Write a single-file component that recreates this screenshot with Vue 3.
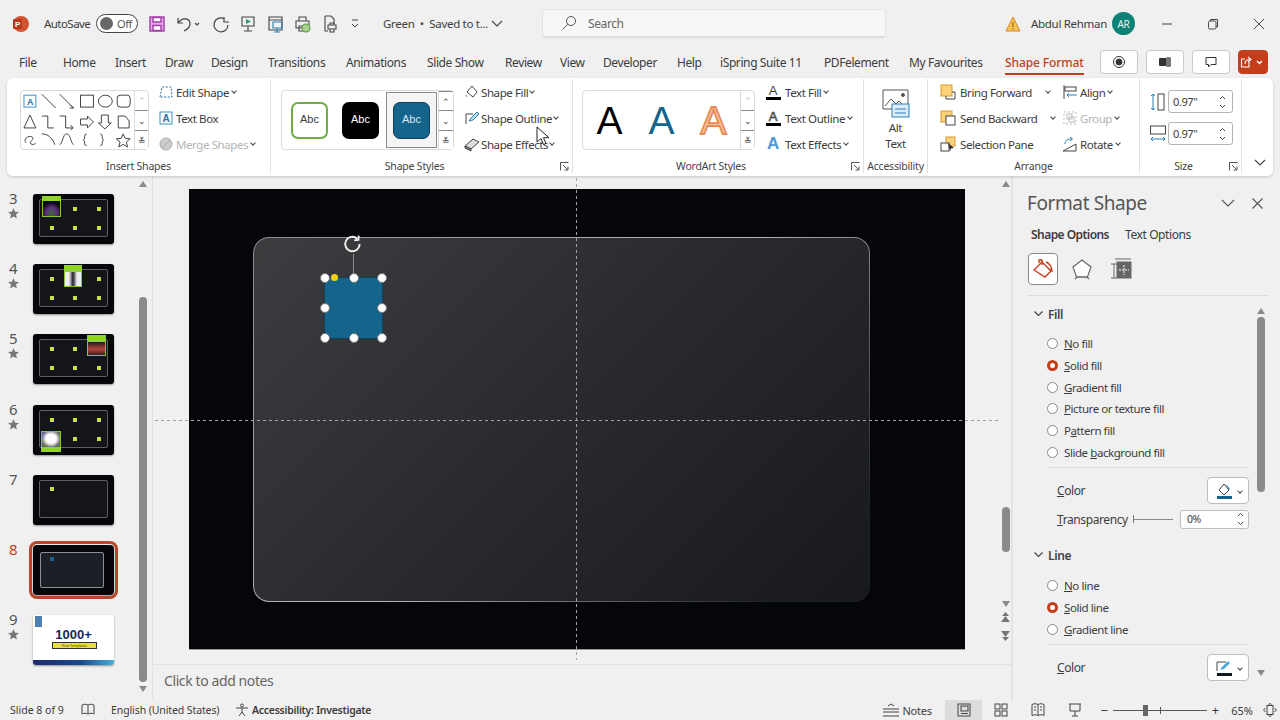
<script setup>
const tabs = [
  { name: 'File', w: 44 }, { name: 'Home', w: 52 }, { name: 'Insert', w: 50 }, { name: 'Draw', w: 46 },
  { name: 'Design', w: 57 }, { name: 'Transitions', w: 78 }, { name: 'Animations', w: 81 }, { name: 'Slide Show', w: 78 },
  { name: 'Review', w: 55 }, { name: 'View', w: 43 }, { name: 'Developer', w: 74 }, { name: 'Help', w: 43 },
  { name: 'iSpring Suite 11', w: 104 }, { name: 'PDFelement', w: 85 }, { name: 'My Favourites', w: 96 }, { name: 'Shape Format', w: 90, active: true },
]

const sixDots = [[17, 13], [40, 13], [64, 13], [17, 32], [40, 32], [64, 32]]
const slides = [
  { n: 3, star: true, dots: sixDots, pop: { x: 9, y: 2, w: 19, h: 21, c: 'rainbow' } },
  { n: 4, star: true, dots: sixDots, pop: { x: 31, y: 1, w: 18, h: 22, c: 'mono' } },
  { n: 5, star: true, dots: sixDots, pop: { x: 54, y: 1, w: 19, h: 21, c: 'sunset' } },
  { n: 6, star: true, dots: sixDots, pop: { x: 8, y: 26, w: 20, h: 21, c: 'paper' } },
  { n: 7, dots: [[17, 12]] },
  { n: 8, current: true, dots: [] },
  { n: 9, star: true, light: true, dots: [] },
]

const fillOptions = [
  { key: 'N', rest: 'o fill' },
  { key: 'S', rest: 'olid fill', on: true },
  { key: 'G', rest: 'radient fill' },
  { key: 'P', rest: 'icture or texture fill' },
  { pre: 'P', key: 'a', rest: 'ttern fill' },
  { pre: 'Slide ', key: 'b', rest: 'ackground fill' },
]
const lineOptions = [
  { key: 'N', rest: 'o line' },
  { key: 'S', rest: 'olid line', on: true },
  { key: 'G', rest: 'radient line' },
]

const handles = [
  [0, 0], [50, 0], [100, 0], [0, 50], [100, 50], [0, 100], [50, 100], [100, 100],
]
</script>

<template>
  <div class="app">
    <!-- title bar -->
    <header class="titlebar">
      <svg class="logo" width="18" height="18" viewBox="0 0 18 18">
        <circle cx="9" cy="9" r="8" fill="#d35230" />
        <rect x="1" y="4" width="9" height="10" rx="1" fill="#b7391b" />
        <text x="5.5" y="12" font-size="8" font-weight="700" fill="#fff" text-anchor="middle" font-family="Liberation Sans">P</text>
      </svg>
      <span class="autosave">AutoSave</span>
      <div class="toggle"><i></i><span>Off</span></div>
      <div class="qat">
        <svg width="18" height="18" viewBox="0 0 18 18" fill="none" stroke="#a23aa8" stroke-width="1.4"><rect x="2" y="2" width="14" height="14" fill="#e3a6e6" /><rect x="5" y="2.5" width="8" height="4.5" fill="#fff" /><rect x="5" y="10.5" width="8" height="5" fill="#fff" /></svg>
        <svg class="q-undo" width="26" height="18" viewBox="0 0 26 18" fill="none" stroke="#444" stroke-width="1.2"><path d="M3 3v5h5M3.5 8C6 3 14 2 15 8c.6 4-3 6.5-6 8" /><path d="M20 8l2 2 2-2" /></svg>
        <svg class="q-redo" width="18" height="18" viewBox="0 0 18 18" fill="none" stroke="#444" stroke-width="1.2"><path d="M12 2v5h5M12 3.5A7 7 0 1 0 16 10" /></svg>
        <svg class="q-1" width="16" height="18" viewBox="0 0 16 18" fill="none" stroke="#444" stroke-width="1.1"><path d="M2 2h12v9H2zM8 11v5M4 16h8" /><path d="M6 4l5 2.5L6 9z" fill="#2e9b6b" stroke="none" /></svg>
        <svg class="q-2" width="18" height="18" viewBox="0 0 18 18" fill="none" stroke="#444" stroke-width="1.1"><path d="M2 2h13v13H2zM2 5h13" /><path d="M6 7h9v6H6z" stroke="#2a80b9" /><path d="M10 13v4M7 17h6" stroke="#2a80b9" /></svg>
        <svg class="q-3" width="18" height="18" viewBox="0 0 18 18" fill="none" stroke="#444" stroke-width="1.1"><path d="M5 6V2h7v4M2 6h13v7H2zM5 11h6v5H5z" /><circle cx="12" cy="13" r="4" fill="#a7d08c" stroke="#5b9a44" /></svg>
        <svg class="q-4" width="16" height="18" viewBox="0 0 16 18" fill="none" stroke="#444" stroke-width="1.1"><path d="M3 1h6l3 3v5M3 1v15h3" /><path d="M6 10h8v4H6zM8 14v3h4v-3M8 10V8h4v2" /></svg>
        <svg class="q-5" width="10" height="12" viewBox="0 0 10 12" fill="none" stroke="#444" stroke-width="1"><path d="M2 2h6M2 6l3 3 3-3" /></svg>
      </div>
      <span class="docname">Green&nbsp; •&nbsp; Saved to t...</span>
      <svg class="doc-chev" width="12" height="8" viewBox="0 0 12 8" fill="none" stroke="#444" stroke-width="1.1"><path d="M1 1l5 5 5-5" /></svg>
      <div class="search">
        <svg width="16" height="16" viewBox="0 0 16 16" fill="none" stroke="#555" stroke-width="1"><circle cx="10" cy="6" r="4.5" /><path d="M6.8 9.2L1.5 14.5" /></svg>
        <span>Search</span>
      </div>
      <svg class="warn" width="16" height="16" viewBox="0 0 16 16"><path d="M8 1l7 14H1z" fill="#f6c64f" stroke="#d9822b" stroke-width="1" /><path d="M8 6v5M8 12v1.4" stroke="#8a4b10" stroke-width="1" /></svg>
      <span class="user">Abdul Rehman</span>
      <div class="avatar">AR</div>
      <div class="winctl">
        <svg width="12" height="12" viewBox="0 0 12 12" stroke="#444" fill="none"><path d="M1 6h10" /></svg>
        <svg width="12" height="12" viewBox="0 0 12 12" stroke="#444" fill="none"><rect x="1.5" y="3" width="7.5" height="8" rx="1.5" /><path d="M3.5 3V1.5h7V9H9" /></svg>
        <svg width="12" height="12" viewBox="0 0 12 12" stroke="#444" fill="none"><path d="M1 1l10 10M11 1L1 11" /></svg>
      </div>
    </header>

    <!-- tabs -->
    <nav class="tabs">
      <span v-for="t in tabs" :key="t.name" class="tab" :class="{ active: t.active }" :style="{ width: t.w + 'px' }"><b>{{ t.name }}</b></span>
      <div class="tab-btns">
        <button class="tbtn"><svg width="14" height="14" viewBox="0 0 14 14" fill="none" stroke="#333"><circle cx="7" cy="7" r="5.5" /><circle cx="7" cy="7" r="3" fill="#333" /></svg></button>
        <button class="tbtn"><svg width="14" height="14" viewBox="0 0 14 14"><rect x="1" y="3" width="8" height="8" rx="1" fill="#333" /><rect x="8" y="2" width="5" height="10" rx="1.5" fill="#777" /></svg></button>
        <button class="tbtn"><svg width="14" height="14" viewBox="0 0 14 14" fill="none" stroke="#333"><path d="M2 2.5h10v7H7l-2.500 2.500V9.500H2z" /></svg></button>
        <button class="tbtn share"><svg width="26" height="14" viewBox="0 0 26 14" fill="none" stroke="#fff" stroke-width="1.1"><path d="M9 7v5H1.500V4H5M5 9c0-3 2-4.500 5-4.500M8 2l3 2.500L8 7" /><path d="M17 6l2.500 2.500L22 6" stroke-width="1.400" /></svg></button>
      </div>
    </nav>

    <!-- ribbon -->
    <section class="ribbon">
      <div class="grp g-insert">
        <div class="grp-body">
          <div class="gallery shapes">
            <svg width="114" height="58" viewBox="0 0 114 58" fill="none" stroke="#444" stroke-width="1">
              <rect x="3" y="4" width="12" height="12" stroke="#3d8fc6" /><text x="9" y="14" font-size="9" fill="#2a6fa5" stroke="none" text-anchor="middle" font-weight="700" font-family="Liberation Sans">A</text>
              <path d="M21 3l14 14M39 3l14 14M50 14l3 3-4 0" />
              <rect x="60" y="4" width="13" height="12" /><ellipse cx="85" cy="10" rx="7" ry="6" /><rect x="97" y="4" width="13" height="12" rx="3" />
              <path d="M3 37l6-13 6 13zM21 25h6v12h6M39 25h6v12h7M50 34l2.500 3-2.500 2" />
              <path d="M60 28h7v-3l6 6-6 6v-3h-7zM81 24h7v8h3l-6.500 6-6.500-6h3zM98 37V25h7l4 5v7z" />
              <path d="M5 52c-3-3 2-8 6-6s-4 5-1 7 5-1 5-1M21 43c6 0 11 4 13 11M39 54c3-1 3-11 7-11s4 9 7 11" />
              <path d="M66 43c-3 0-1 5-3 6 2 1 0 6 3 6M80 43c3 0 1 5 3 6-2 1 0 6-3 6" />
              <path d="M103 43l2 4.500 5 .5-3.800 3.200 1.200 5-4.400-2.700-4.400 2.700 1.200-5L96 48l5-.5z" />
            </svg>
            <div class="gal-scroll"><span class="dis">⌃</span><span class="box">⌄</span><span class="box">≚</span></div>
          </div>
          <div class="cmds edit-cmds">
            <div class="cmd">
              <svg width="16" height="16" viewBox="0 0 16 16" fill="none" stroke="#2a6fa5" stroke-dasharray="2 1.500"><path d="M2 13L4 3h9l1 10z" /></svg>
              <span>Edit Shape</span><em></em>
            </div>
            <div class="cmd">
              <svg width="16" height="16" viewBox="0 0 16 16" fill="none" stroke="#3d8fc6"><rect x="2" y="2" width="12" height="12" /><text x="8" y="12" font-size="10" font-weight="700" fill="#2a6fa5" stroke="none" text-anchor="middle" font-family="Liberation Sans">A</text></svg>
              <span>Text Box</span>
            </div>
            <div class="cmd off">
              <svg width="16" height="16" viewBox="0 0 16 16" fill="#ccc" stroke="#aaa"><circle cx="8" cy="8" r="6" /><path d="M4 12l8-8" /></svg>
              <span>Merge Shapes</span><em></em>
            </div>
          </div>
        </div>
        <div class="grp-label">Insert Shapes</div>
      </div>

      <div class="grp g-styles">
        <div class="grp-body">
          <div class="gallery styles">
            <div class="abc-cell"><div class="abc a1">Abc</div></div>
            <div class="abc-cell"><div class="abc a2">Abc</div></div>
            <div class="abc-cell sel"><div class="abc a3">Abc</div></div>
            <div class="gal-scroll wide"><span class="box">⌃</span><span class="box">⌄</span><span class="box">≚</span></div>
          </div>
          <div class="cmds fx-cmds">
            <div class="cmd">
              <svg width="16" height="16" viewBox="0 0 16 16" fill="none" stroke="#444"><path d="M3 8l5-6 5 6-4 5z" /><path d="M2 11c0 1 1 2 1 2" stroke="#2a6fa5" /></svg>
              <span>Shape Fill</span><em></em>
            </div>
            <div class="cmd">
              <svg width="16" height="16" viewBox="0 0 16 16" fill="none"><path d="M2 14V4h7" stroke="#444" /><path d="M5 11l2-3 6-6 2 2-6 6z" fill="#bfe0f3" stroke="#2a80b9" /></svg>
              <span>Shape Outline</span><em></em>
            </div>
            <div class="cmd">
              <svg width="16" height="16" viewBox="0 0 16 16" fill="#888" stroke="#444"><path d="M1 10l8-7 6 3-8 7z" fill="#ddd" /><path d="M1 10l6 3v2l-6-3z" /></svg>
              <span>Shape Effects</span><em></em>
            </div>
          </div>
        </div>
        <div class="grp-label shifted">Shape Styles<svg class="launcher" width="9" height="9" viewBox="0 0 9 9" fill="none" stroke="#555"><path d="M.5 8.500v-8h8M3 3l5 5M8 4.500V8H4.500" /></svg></div>
      </div>

      <div class="grp g-wordart">
        <div class="grp-body">
          <div class="gallery wa">
            <div class="wa-letters">
              <span class="w1">A</span><span class="w2">A</span><span class="w3">A</span>
            </div>
            <div class="gal-scroll"><span class="dis">⌃</span><span class="box">⌄</span><span class="box">≚</span></div>
          </div>
          <div class="cmds ta-cmds">
            <div class="cmd">
              <span class="ta-ico"><u class="ul-a">A</u><i class="bar k"></i></span>
              <span>Text Fill</span><em></em>
            </div>
            <div class="cmd">
              <span class="ta-ico"><u class="ul-a hollow">A</u><i class="bar k"></i></span>
              <span>Text Outline</span><em></em>
            </div>
            <div class="cmd">
              <span class="ta-ico"><u class="ul-a blue">A</u></span>
              <span>Text Effects</span><em></em>
            </div>
          </div>
        </div>
        <div class="grp-label shifted">WordArt Styles<svg class="launcher" width="9" height="9" viewBox="0 0 9 9" fill="none" stroke="#555"><path d="M.5 8.500v-8h8M3 3l5 5M8 4.500V8H4.500" /></svg></div>
      </div>

      <div class="grp g-access">
        <div class="grp-body alt">
          <svg width="28" height="32" viewBox="0 0 28 32" fill="none" stroke="#555"><path d="M1 2h25v19H1z" /><path d="M3 18l6-7 5 5 3-3 6 6" /><circle cx="21" cy="7" r="1.500" fill="#555" /><rect x="10" y="16" width="17" height="13" fill="#dcecf7" stroke="#2a80b9" /><path d="M13 21h11M13 25h11" stroke="#2a80b9" /></svg>
          <span>Alt</span><span>Text</span>
        </div>
        <div class="grp-label">Accessibility</div>
      </div>

      <div class="grp g-arrange">
        <div class="grp-body">
          <div class="cmds arr1">
            <div class="cmd">
              <svg width="16" height="16" viewBox="0 0 16 16"><rect x="1" y="1" width="11" height="11" fill="#fbd27a" stroke="#d8992f" /><path d="M12 8h3v7H6v-3" fill="none" stroke="#444" /></svg>
              <span>Bring Forward</span><em class="far"></em>
            </div>
            <div class="cmd">
              <svg width="16" height="16" viewBox="0 0 16 16"><rect x="1" y="1" width="11" height="11" fill="#fbd27a" stroke="#d8992f" /><rect x="6" y="6" width="9" height="9" fill="#fff" stroke="#444" /></svg>
              <span>Send Backward</span><em class="far"></em>
            </div>
            <div class="cmd">
              <svg width="16" height="16" viewBox="0 0 16 16"><rect x="6" y="1" width="9" height="9" fill="#fbd27a" stroke="#d8992f" /><rect x="1" y="7" width="8" height="8" fill="#fff" stroke="#444" /><path d="M8 7l6 5-3 .5-1 3z" fill="#333" /></svg>
              <span>Selection Pane</span>
            </div>
          </div>
          <div class="cmds arr2">
            <div class="cmd">
              <svg width="16" height="16" viewBox="0 0 16 16" fill="none" stroke="#444"><path d="M2 1v14" /><rect x="3" y="3" width="11" height="4" /><path d="M15 11H5M7 9l-2 2 2 2" stroke="#2a80b9" /></svg>
              <span>Align</span><em></em>
            </div>
            <div class="cmd off">
              <svg width="16" height="16" viewBox="0 0 16 16" fill="none" stroke="#bbb"><rect x="2" y="2" width="12" height="12" stroke-dasharray="2 2" /><rect x="5" y="4" width="5" height="5" /><rect x="7" y="7" width="5" height="5" /></svg>
              <span>Group</span><em></em>
            </div>
            <div class="cmd">
              <svg width="16" height="16" viewBox="0 0 16 16" fill="none" stroke="#444"><path d="M1 15L14 8v7z" /><path d="M3 8c0-4 3-5 7-5M8 1l2.500 2L8 5" stroke="#2a80b9" /></svg>
              <span>Rotate</span><em></em>
            </div>
          </div>
        </div>
        <div class="grp-label">Arrange</div>
      </div>

      <div class="grp g-size">
        <div class="grp-body sizes">
          <div class="size-row">
            <svg width="16" height="20" viewBox="0 0 16 20" fill="none" stroke="#444"><rect x="8" y="2" width="6" height="16" /><path d="M3 2v16M1 4l2-2 2 2M1 16l2 2 2-2" stroke="#2a80b9" /></svg>
            <div class="spin">
              <span>0.97"</span>
              <svg width="7" height="14" viewBox="0 0 7 14" fill="none" stroke="#444"><path d="M1 4l2.500-2.500L6 4M1 10l2.500 2.500L6 10" /></svg>
            </div>
          </div>
          <div class="size-row">
            <svg width="16" height="20" viewBox="0 0 16 20" fill="none" stroke="#444"><rect x="0.500" y="2" width="15" height="8" /><path d="M1 15h14M3 13l-2 2 2 2M13 13l2 2-2 2" stroke="#2a80b9" /></svg>
            <div class="spin">
              <span>0.97"</span>
              <svg width="7" height="14" viewBox="0 0 7 14" fill="none" stroke="#444"><path d="M1 4l2.500-2.500L6 4M1 10l2.500 2.500L6 10" /></svg>
            </div>
          </div>
        </div>
        <div class="grp-label shifted">Size<svg class="launcher" width="9" height="9" viewBox="0 0 9 9" fill="none" stroke="#555"><path d="M.5 8.500v-8h8M3 3l5 5M8 4.500V8H4.500" /></svg></div>
      </div>

      <svg class="collapse" width="12" height="8" viewBox="0 0 12 8" fill="none" stroke="#444" stroke-width="1.1"><path d="M1 1l5 5 5-5" /></svg>
    </section>

    <!-- workspace -->
    <main class="workspace">
      <aside class="slides">
        <div class="slide-list">
          <div v-for="s in slides" :key="s.n" class="slide-row">
            <div class="slide-no" :class="{ cur: s.current }">
              <span>{{ s.n }}</span>
              <svg v-if="s.star" width="11" height="11" viewBox="0 0 10 10"><path d="M5 0l1.400 3.300L10 3.700 7.300 6l.8 3.600L5 7.700 1.900 9.600 2.700 6 0 3.700l3.600-.4z" fill="#777" /></svg>
            </div>
            <div class="thumb" :class="{ current: s.current, light: s.light }">
              <template v-if="!s.light">
                <div class="t-frame"></div>
                <i v-for="(d, i) in s.dots" :key="i" class="t-dot" :style="{ left: d[0] + 'px', top: d[1] + 'px' }"></i>
                <div v-if="s.pop" class="t-pop" :class="s.pop.c" :style="{ left: s.pop.x + 'px', top: s.pop.y + 'px', width: s.pop.w + 'px', height: s.pop.h + 'px' }"></div>
                <i v-if="s.current" class="t-blue"></i>
              </template>
              <template v-else>
                <div class="t-logo"></div>
                <div class="t-big">1000+</div>
                <div class="t-yellow">Free Templates</div>
                <div class="t-wave"></div>
              </template>
            </div>
          </div>
        </div>
        <div class="thumb-scroll">
          <span class="tri up"></span>
          <div class="thumb-track"><i></i></div>
          <span class="tri down"></span>
        </div>
      </aside>

      <div class="editor">
        <div class="stage">
          <div class="slide">
            <div class="card">
              <div class="picked">
                <div class="rot-line"></div>
                <svg class="rot" width="24" height="24" viewBox="0 0 20 20" fill="none" stroke="#eee" stroke-width="1.600"><path d="M15.500 10a6 6 0 1 1-2-4.500" /><path d="M11 7l3.500-.5.300-3.500" /></svg>
                <i v-for="(h, i) in handles" :key="i" class="handle" :style="{ left: h[0] + '%', top: h[1] + '%' }"></i>
                <i class="adjust"></i>
              </div>
            </div>
          </div>
          <div class="v-scroll">
            <span class="tri up"></span>
            <div class="v-track"><i></i></div>
            <span class="tri down"></span>
            <svg class="page-arrow" width="9" height="12" viewBox="0 0 9 12" fill="#777"><path d="M4.500 0L8 4H1zM4.500 4L9 10H0z" /></svg>
            <svg class="page-arrow" width="9" height="12" viewBox="0 0 9 12" fill="#777"><path d="M4.500 12L8 8H1zM4.500 8L9 2H0z" /></svg>
          </div>
          <div class="guide-v"></div>
          <div class="guide-h"></div>
        </div>
        <div class="notes">Click to add notes</div>
      </div>

      <aside class="pane">
        <div class="pane-head">
          <span>Format Shape</span>
          <svg width="14" height="9" viewBox="0 0 14 9" fill="none" stroke="#555" stroke-width="1.100"><path d="M1 1l6 6 6-6" /></svg>
          <svg width="11" height="11" viewBox="0 0 11 11" fill="none" stroke="#555" stroke-width="1.100"><path d="M.5.5l10 10M10.500.5l-10 10" /></svg>
        </div>
        <div class="pane-tabs"><b>Shape Options</b><span>Text Options</span></div>
        <div class="pane-icons">
          <div class="pi on">
            <svg width="24" height="24" viewBox="0 0 24 24" fill="none" stroke="#c43e1c" stroke-width="1.400"><path d="M3 13l8-8 9 9-6 6z" /><path d="M8 6V3h3v5M15 5c3 1 6 5 6 9l-3-2" /></svg>
          </div>
          <div class="pi"><svg width="22" height="24" viewBox="0 0 22 24" fill="#fff" stroke="#666" stroke-width="1.200"><path d="M11 3l9 7-3.500 10h-11L2 10z" /><path d="M4 22l2-2h10l2 2" fill="none" /></svg></div>
          <div class="pi"><svg width="22" height="22" viewBox="0 0 22 22" stroke="#666" fill="none"><path d="M5 1h16M1 6h6M1 20h6M4 6v14" /><rect x="7" y="4" width="14" height="16" fill="#666" /><path d="M14 7v10M9 12h10" stroke="#fff" stroke-dasharray="2 1" /></svg></div>
        </div>
        <div class="pane-scrollarea">
          <div class="pane-body">
            <div class="sec-head"><svg width="9" height="6" viewBox="0 0 9 6" fill="none" stroke="#444" stroke-width="1.200"><path d="M.5.500l4 4 4-4" /></svg><b>Fill</b></div>
            <ul class="radios">
              <li v-for="o in fillOptions" :key="o.rest" :class="{ on: o.on }"><i></i><span>{{ o.pre }}<u>{{ o.key }}</u>{{ o.rest }}</span></li>
            </ul>
            <div class="prop color">
              <span><u>C</u>olor</span>
              <div class="color-btn">
                <svg width="20" height="18" viewBox="0 0 20 18"><path d="M5 8l5-6 5 6-5 5z" fill="#fff" stroke="#444" /><path d="M12 2l4 5-2 0" fill="#2a80b9" /><rect x="3" y="14" width="15" height="3" fill="#14648c" /></svg>
                <em></em>
              </div>
            </div>
            <div class="prop transp">
              <span><u>T</u>ransparency</span>
              <div class="tr-slider"><i></i></div>
              <div class="tr-input">
                <span>0%</span>
                <svg width="7" height="14" viewBox="0 0 7 14" fill="none" stroke="#444"><path d="M1 4l2.500-2.500L6 4M1 10l2.500 2.500L6 10" /></svg>
              </div>
            </div>
            <div class="sec-head line-head"><svg width="9" height="6" viewBox="0 0 9 6" fill="none" stroke="#444" stroke-width="1.200"><path d="M.5.500l4 4 4-4" /></svg><b>Line</b></div>
            <ul class="radios">
              <li v-for="o in lineOptions" :key="o.rest" :class="{ on: o.on }"><i></i><span><u>{{ o.key }}</u>{{ o.rest }}</span></li>
            </ul>
            <div class="prop color line-color">
              <span><u>C</u>olor</span>
              <div class="color-btn">
                <svg width="20" height="18" viewBox="0 0 20 18"><path d="M3 12V3h9" fill="none" stroke="#444" /><path d="M6 11l2-3 6-6 2 2-6 6z" fill="#4ea6dc" /><rect x="3" y="14" width="15" height="3" fill="#0b1a24" /></svg>
                <em></em>
              </div>
            </div>
          </div>
          <div class="pane-scroll">
            <span class="tri up"></span>
            <div class="pane-track"><i></i></div>
            <span class="tri down"></span>
          </div>
        </div>
      </aside>
    </main>

    <!-- status bar -->
    <footer class="status">
      <span class="st-slide">Slide 8 of 9</span>
      <svg class="st-book" width="14" height="14" viewBox="0 0 14 14" fill="none" stroke="#444"><path d="M1 2c2-1 4-1 6 0 2-1 4-1 6 0v9c-2-1-4-1-6 0-2-1-4-1-6 0zM7 2v9" /></svg>
      <span class="st-lang">English (United States)</span>
      <svg class="st-acc" width="14" height="14" viewBox="0 0 14 14" fill="none" stroke="#444"><circle cx="7" cy="2.500" r="1.500" /><path d="M1 5h12M7 5v4M7 9l-3 4M7 9l3 4" /></svg>
      <b class="st-inv">Accessibility: Investigate</b>
      <div class="st-right">
        <div class="st-notes">
          <svg width="18" height="14" viewBox="0 0 18 14" fill="none" stroke="#444"><path d="M1 6h16M1 9h16M1 13h16M6 3l3-2 3 2" /></svg>
          <span>Notes</span>
        </div>
        <div class="view on"><svg width="14" height="14" viewBox="0 0 14 14" fill="none" stroke="#444"><rect x="1" y="1" width="12" height="12" /><rect x="4" y="3" width="7" height="5" /><path d="M4 10.500h7" /></svg></div>
        <div class="view"><svg width="14" height="14" viewBox="0 0 14 14" fill="none" stroke="#444"><rect x="1" y="1" width="5" height="5" /><rect x="8" y="1" width="5" height="5" /><rect x="1" y="8" width="5" height="5" /><rect x="8" y="8" width="5" height="5" /></svg></div>
        <div class="view"><svg width="14" height="14" viewBox="0 0 14 14" fill="none" stroke="#444"><path d="M1 1.500c2-1 4-1 6 0 2-1 4-1 6 0v11c-2-1-4-1-6 0-2-1-4-1-6 0zM7 1.500v11M3 4h2M3 7h2M9 4h2M9 7h2" /></svg></div>
        <div class="view"><svg width="14" height="14" viewBox="0 0 14 14" fill="none" stroke="#444"><path d="M1 1h12M2 1v7h10V1M7 8v5M4 13h6" /></svg></div>
        <div class="zoom">
          <span>−</span>
          <div class="z-track"><i class="z-mark"></i><i class="z-thumb"></i></div>
          <span>+</span>
        </div>
        <span class="z-pct">65%</span>
        <svg width="14" height="14" viewBox="0 0 14 14" fill="none" stroke="#444"><rect x="4" y="2.500" width="6" height="9" /><path d="M2.500 5L.5 7l2 2M11.500 5l2 2-2 2M5.500 1.500L7 .5l1.500 1M5.500 12.500L7 13.500l1.500-1" /></svg>
      </div>
    </footer>

    <svg class="cursor" width="14" height="20" viewBox="0 0 14 20"><path d="M1 1v15l4-3.500 2.500 6 2.500-1-2.500-5.800H13z" fill="#fff" stroke="#222" /></svg>
  </div>
</template>

<style scoped>
.app {
  position: relative;
  width: 1280px;
  height: 720px;
  overflow: hidden;
  background: #f0f0f0;
  color: #3c3c3c;
  font-family: "Noto Sans", "Open Sans", sans-serif;
  font-size: 12px;
  letter-spacing: -0.4px;
}

/* title bar */
.titlebar {
  display: flex;
  align-items: center;
  height: 47px;
  padding-left: 12px;
}
.logo { flex: none; }
.autosave { margin-left: 14px; width: 52px; font-size: 11.500px; letter-spacing: -0.55px; }
.toggle {
  display: flex;
  align-items: center;
  flex: none;
  width: 42px;
  height: 19px;
  border: 1px solid #444;
  border-radius: 10px;
  box-sizing: border-box;
  padding-left: 3px;
  gap: 4px;
  background: #fff;
}
.toggle i { width: 13px; height: 13px; border-radius: 50%; background: #666; }
.toggle span { font-size: 11px; color: #555; }
.qat { display: flex; align-items: center; margin-left: 10px; }
.q-undo { margin-left: 9px; }
.q-redo { margin-left: 11px; }
.q-1 { margin-left: 10px; }
.q-2 { margin-left: 11px; }
.q-3 { margin-left: 9px; }
.q-4 { margin-left: 10px; }
.q-5 { margin-left: 12px; }
.docname { margin-left: 23px; width: 107px; white-space: nowrap; font-size: 11.500px; letter-spacing: -0.3px; }
.doc-chev { margin-left: 1px; }
.search {
  display: flex;
  align-items: center;
  gap: 11px;
  flex: none;
  width: 344px;
  height: 29px;
  margin-left: 39px;
  padding-left: 18px;
  box-sizing: border-box;
  background: #f7f7f7;
  border: 1px solid #e4e4e4;
  border-bottom: 2px solid #dcdcdc;
  border-radius: 4px;
  color: #666;
}
.warn { margin-left: 119px; flex: none; }
.user { margin-left: 10px; width: 78px; white-space: nowrap; font-size: 11.500px; letter-spacing: -0.3px; }
.avatar {
  display: flex;
  align-items: center;
  justify-content: center;
  flex: none;
  width: 23px;
  height: 23px;
  margin-left: 3px;
  border-radius: 50%;
  background: #0a8276;
  color: #e6f3f1;
  font-size: 10px;
}
.winctl { display: flex; align-items: center; gap: 34px; margin-left: 26px; }

/* tabs */
.tabs {
  display: flex;
  align-items: center;
  height: 31px;
  padding-left: 19px;
}
.tab { flex: none; white-space: nowrap; }
.tab b { display: inline-block; font-weight: 400; line-height: 20px; }
.tab.active b { color: #c43e1c; font-weight: 500; letter-spacing: -0.1px; border-bottom: 2px solid #c43e1c; margin-top: 2px; }
.tab-btns { position: absolute; left: 1100px; top: 50px; display: flex; gap: 8px; }
.tbtn {
  display: flex;
  align-items: center;
  justify-content: center;
  width: 38px;
  height: 24px;
  padding: 0;
  background: #fff;
  border: 1px solid #c9c9c9;
  border-radius: 4px;
}
.tbtn.share { width: 30px; background: #c43e1c; border-color: #c43e1c; }

/* ribbon */
.ribbon {
  position: relative;
  display: flex;
  width: 1266px;
  height: 98px;
  margin-left: 7px;
  background: #fff;
  border-radius: 6px;
  box-shadow: 0 1px 3px rgba(0, 0, 0, 0.18);
}
.grp {
  position: relative;
  display: flex;
  flex-direction: column;
  flex: none;
  box-sizing: border-box;
  border-right: 1px solid #e1e1e1;
  margin: 1px 0 3px;
}
.g-insert { width: 264px; }
.g-styles { width: 302px; }
.g-wordart { width: 291px; }
.g-access { width: 64px; }
.g-arrange { width: 212px; }
.g-size { width: 102px; }
.grp-body { display: flex; height: 80px; flex: none; }
.grp-label {
  position: relative;
  text-align: center;
  font-size: 10.500px;
  line-height: 14px;
  letter-spacing: -0.2px;
  color: #444;
}
.grp-label.shifted { padding-right: 14px; }
.launcher { position: absolute; right: 3px; top: 3px; }
.cmds { display: flex; flex-direction: column; }
.cmd {
  display: flex;
  align-items: center;
  gap: 2px;
  height: 26px;
  flex: none;
  white-space: nowrap;
  font-size: 11.500px;
}
.cmd em { width: 7px; height: 5px; flex: none; }
.cmd em::after {
  content: "";
  display: block;
  width: 3px;
  height: 3px;
  margin: -1px 0 0 1px;
  border-right: 1px solid #444;
  border-bottom: 1px solid #444;
  transform: rotate(45deg);
}
.cmd.off { color: #b4b4b4; }
.gallery {
  display: flex;
  align-items: stretch;
  position: relative;
  box-sizing: border-box;
  border: 1px solid #dadada;
  border-radius: 4px;
  height: 60px;
  margin-top: 11px;
}
.shapes { width: 129px; margin-left: 13px; }
.gal-scroll {
  display: flex;
  flex-direction: column;
  width: 13px;
  margin-left: auto;
  border-left: 1px solid #dadada;
  font-size: 9px;
  line-height: 19px;
  text-align: center;
}
.gal-scroll span { height: 20px; box-sizing: border-box; overflow: hidden; }
.gal-scroll .box { border-top: 1px solid #8a8a8a; background: #fff; }
.gal-scroll .dis { color: #bbb; }
.gal-scroll.wide { width: 14px; }
.edit-cmds { margin-left: 9px; }
.g-styles .gallery { width: 173px; margin-left: 10px; }
.abc-cell {
  display: flex;
  align-items: center;
  justify-content: center;
  width: 51px;
  box-sizing: border-box;
}
.abc-cell.sel { border: 1px solid #8a8a8a; background: #f4f4f4; height: 56px; align-self: center; }
.abc {
  display: flex;
  align-items: center;
  justify-content: center;
  width: 37px;
  height: 37px;
  padding-bottom: 3px;
  border-radius: 7px;
  box-sizing: border-box;
  font-family: "Liberation Sans", sans-serif;
  font-size: 11px;
  letter-spacing: 0;
}
.a1 { background: #fff; border: 2px solid #70ad47; }
.a2 { background: #000; color: #fff; }
.a3 { background: #14648c; color: #dce9f1; border: 1px solid #0f3f5a; }
.styles .abc-cell:nth-child(1) { margin-left: 2px; }
.fx-cmds { margin-left: 10px; }
.fx-cmds .cmd { gap: 1px; }
.wa { width: 173px; margin-left: 9px; }
.wa-letters { display: flex; flex: 1; align-items: center; justify-content: center; gap: 26px; font-family: "Liberation Sans", sans-serif; font-size: 39px; line-height: 1; letter-spacing: 0; }
.w1 { color: #000; }
.w2 { color: #14648c; }
.w3 { color: #f6c9a8; -webkit-text-stroke: 1.800px #e98a55; }
.ta-cmds { margin-left: 10px; }
.ta-ico { display: inline-flex; flex-direction: column; align-items: center; width: 16px; margin-right: 2px; }
.ul-a { font-family: "Liberation Sans", sans-serif; font-size: 13px; line-height: 12px; text-decoration: none; }
.ul-a.hollow { color: #eee; -webkit-text-stroke: 0.700px #444; }
.ul-a.blue { font-size: 17px; line-height: 16px; font-weight: 700; color: #4b9ad6; }
.bar { display: block; width: 15px; height: 3px; }
.bar.k { background: #000; }
.alt {
  flex-direction: column;
  align-items: center;
  padding-top: 9px;
  box-sizing: border-box;
  line-height: 16px;
  font-size: 11.500px;
}
.arr1 { width: 122px; margin-left: 12px; }
.arr1 .cmd { gap: 4px; }
.far { margin-left: 9px; }
.sizes { flex-direction: column; padding: 11px 0 0 10px; gap: 9px; box-sizing: border-box; }
.size-row { display: flex; align-items: center; gap: 2px; }
.spin {
  display: flex;
  align-items: center;
  justify-content: space-between;
  width: 65px;
  height: 23px;
  box-sizing: border-box;
  padding: 0 6px 0 4px;
  border: 1px solid #b5b5b5;
  border-radius: 3px;
  font-size: 11px;
}
.collapse { position: absolute; right: 7px; top: 81px; }

/* workspace */
.workspace {
  display: grid;
  grid-template-columns: 153px 860px 267px;
  height: 524px;
}
.slides { display: flex; border-right: 1px solid #e2e2e2; }
.slide-list { display: flex; flex-direction: column; width: 138px; padding-top: 18px; gap: 20.200px; flex: none; }
.slide-row { display: flex; height: 50px; }
.slide-no {
  display: flex;
  flex-direction: column;
  width: 33px;
  padding-left: 9px;
  box-sizing: border-box;
  font-size: 15px;
  line-height: 17px;
  letter-spacing: 0;
  color: #555;
  margin-top: -4px;
}
.slide-no.cur { color: #c43e1c; }
.slide-no svg { margin: 1px 0 0 -1px; }
.thumb {
  position: relative;
  width: 81px;
  height: 50px;
  flex: none;
  background: #06070a;
  border-radius: 3px;
  box-shadow: 0 1px 2px rgba(0, 0, 0, 0.4);
}
.thumb.current { outline: 3px solid #b7472a; outline-offset: 1px; border-radius: 4px; }
.thumb.light { background: #fff; overflow: hidden; }
.t-frame { position: absolute; left: 6px; top: 5px; width: 69px; height: 38px; box-sizing: border-box; border: 1px solid #5c5e60; border-radius: 2px; background: #131518; }
.thumb.current .t-frame { left: 7px; top: 7px; width: 64px; height: 36px; border-color: #8b8f94; background: #1c2026; }
.t-dot { position: absolute; width: 4px; height: 4px; background: #c6e04a; }
.t-blue { position: absolute; left: 17px; top: 12px; width: 4px; height: 4px; background: #14648c; }
.t-pop { position: absolute; box-sizing: border-box; border: 1px solid #86c92d; }
.t-pop.rainbow { background: radial-gradient(circle at 50% 80%, #3d6f35, #5a2c84 40%, #0a0a14 70%); border-top: 5px solid #8fd42c; }
.t-pop.mono { background: linear-gradient(90deg, #eee 25%, #222 50%, #eee 75%); border-top: 7px solid #8fd42c; }
.t-pop.sunset { background: linear-gradient(#2a1520, #b2483a 55%, #3a1a28); border-top: 7px solid #8fd42c; }
.t-pop.paper { background: radial-gradient(ellipse at 50% 45%, #fff 40%, #667 75%); border-bottom: 5px solid #8fd42c; }
.t-logo { position: absolute; left: 2px; top: 1px; width: 7px; height: 11px; background: #4d7fb0; }
.t-big { position: absolute; left: 0; right: 0; top: 12px; text-align: center; font-family: "Liberation Sans", sans-serif; font-weight: 700; font-size: 13px; line-height: 15px; letter-spacing: 0; color: #17255a; }
.t-yellow { position: absolute; left: 19px; top: 27px; width: 43px; height: 5px; border: 0.500px solid #333; background: #e8e22c; color: #333; font-size: 3.500px; line-height: 5px; text-align: center; overflow: hidden; letter-spacing: 0; }
.t-wave { position: absolute; left: 0; right: 0; bottom: 0; height: 5px; background: linear-gradient(90deg, #1b2a6b, #1c4a8f 60%, #45b0d8); }
.thumb-scroll { display: flex; flex-direction: column; align-items: center; width: 9px; height: 516px; padding-top: 5px; box-sizing: border-box; }
.thumb-track { flex: 1; width: 8px; position: relative; margin: 4px 0; }
.thumb-track i { position: absolute; left: 0; right: 0; top: 106px; bottom: 0; background: #8a8a8a; border-radius: 4px; }
.tri { width: 0; height: 0; border-left: 4.500px solid transparent; border-right: 4.500px solid transparent; flex: none; }
.tri.up { border-bottom: 6px solid #8a8a8a; }
.tri.down { border-top: 6px solid #8a8a8a; }

.editor { display: flex; flex-direction: column; border-right: 2px solid #e2e2e2; box-sizing: border-box; }
.stage { position: relative; display: flex; height: 489px; padding: 13px 0 0 36px; box-sizing: border-box; border-bottom: 1px solid #e0e0e0; }
.slide {
  width: 776px;
  height: 460px;
  flex: none;
  box-sizing: border-box;
  padding: 48px 95px 47px 64px;
  background: #05060a;
  box-shadow: 0 1px 0 #999;
}
.card {
  position: relative;
  height: 100%;
  box-sizing: border-box;
  border-radius: 16px;
  border: 1px solid transparent;
  background:
    linear-gradient(135deg, #3c3d3f, #282a2e 50%, #17191d) padding-box,
    linear-gradient(315deg, #1d2025 10%, #b5b7b9 50%, #8a8c8e) border-box;
}
.picked {
  position: absolute;
  left: 70px;
  top: 39px;
  width: 59px;
  height: 62px;
  background: #14648c;
  border: 1px solid #0f3f5a;
  border-radius: 6px;
  box-sizing: border-box;
}
.handle {
  position: absolute;
  width: 8px;
  height: 8px;
  margin: -5px 0 0 -5px;
  background: #fff;
  border: 1px solid #777;
  border-radius: 50%;
}
.adjust { position: absolute; left: 6px; top: -4px; width: 7px; height: 7px; background: #f2d40c; border-radius: 50%; }
.rot-line { position: absolute; left: 28px; top: -24px; width: 1px; height: 24px; background: #8a8a8a; }
.rot { position: absolute; left: 16px; top: -46px; }
.v-scroll { display: flex; flex-direction: column; align-items: center; width: 9px; margin-left: 36px; margin-top: -8px; height: 460px; }
.v-track { position: relative; flex: 1; width: 8px; margin: 4px 0; }
.v-track i { position: absolute; left: 0; right: 0; top: 316px; height: 45px; background: #8a8a8a; border-radius: 4px; }
.page-arrow { margin-top: 5px; flex: none; }
.guide-v { position: absolute; left: 423px; top: 2px; width: 1px; height: 482px; background: repeating-linear-gradient(180deg, #a3a3a3 0 3px, transparent 3px 6px); }
.guide-h { position: absolute; left: 2px; top: 244px; width: 843px; height: 1px; background: repeating-linear-gradient(90deg, #a3a3a3 0 3px, transparent 3px 6px); }
.notes { padding: 6px 0 0 11px; font-size: 14px; color: #666; }

/* format pane */
.pane { display: flex; flex-direction: column; padding-left: 14px; }
.pane-head { display: flex; align-items: center; height: 28px; margin-top: 13px; }
.pane-head span { width: 194px; font-size: 19px; color: #555; white-space: nowrap; }
.pane-head svg:last-child { margin-left: 17px; }
.pane-tabs { display: flex; gap: 16px; margin: 9px 0 0 4px; line-height: 18px; }
.pane-tabs b { font-weight: 600; letter-spacing: -0.55px; }
.pane-icons { display: flex; gap: 9px; align-items: center; height: 32px; margin: 9px 0 0 1px; padding-bottom: 10px; border-bottom: 1px solid #ddd; width: 240px; }
.pi { display: flex; align-items: center; justify-content: center; width: 30px; height: 32px; box-sizing: border-box; }
.pi.on { background: #fff; border: 1px solid #8a8a8a; border-radius: 4px; }
.pane-scrollarea { display: flex; }
.pane-body { width: 222px; flex: none; margin-right: 7px; }
.sec-head { display: flex; align-items: center; gap: 5px; height: 16px; margin: 10px 0 0 7px; }
.sec-head b { font-weight: 600; color: #444; }
.line-head { margin-top: 18px; }
.radios { list-style: none; margin: 11px 0 0 20px; padding: 0 0 4px; border-bottom: 1px solid #ddd; }
.line-head + .radios { margin-top: 12px; }
.radios li { display: flex; align-items: center; height: 21.700px; gap: 6px; font-size: 11.500px; letter-spacing: -0.43px; }
.radios li i {
  width: 11px;
  height: 11px;
  flex: none;
  box-sizing: border-box;
  border: 1px solid #888;
  border-radius: 50%;
  background: #fff;
}
.radios li.on i { border: 3px solid #c43e1c; }
.prop { display: flex; align-items: center; }
.prop.color { justify-content: space-between; margin: 9px 0 0 30px; height: 27px; }
.color-btn { display: flex; align-items: center; gap: 4px; justify-content: center; width: 42px; height: 27px; box-sizing: border-box; background: #fff; border: 1px solid #bdbdbd; border-radius: 4px; }
.color-btn em { width: 3px; height: 3px; border-right: 1px solid #444; border-bottom: 1px solid #444; transform: rotate(45deg); }
.prop.transp { margin: 5px 0 0 30px; height: 20px; white-space: nowrap; }
.prop.transp > span { width: 76px; flex: none; }
.tr-slider { position: relative; width: 40px; height: 1px; background: #888; margin-right: 7px; flex: none; }
.tr-slider i { position: absolute; left: 0; top: -4px; width: 1px; height: 8px; background: #777; }
.tr-input { display: flex; align-items: center; justify-content: space-between; width: 69px; height: 19px; padding: 0 4px 0 6px; box-sizing: border-box; background: #fff; border: 1px solid #bdbdbd; border-radius: 3px; font-size: 10.500px; }
.pane-scroll { display: flex; flex-direction: column; align-items: center; width: 9px; height: 368px; margin-top: 12px; }
.pane-track { flex: 1; width: 8px; margin: 3px 0; position: relative; }
.pane-track i { position: absolute; left: 0; right: 0; top: 0; height: 175px; background: #8a8a8a; border-radius: 4px; }

/* status bar */
.status { display: flex; align-items: center; height: 20px; padding-left: 10px; font-size: 10.500px; white-space: nowrap; letter-spacing: 0; }
.st-slide { width: 71px; }
.st-book { margin-right: 16px; }
.st-lang { width: 124px; letter-spacing: -0.1px; }
.st-acc { margin-right: 3px; }
.st-inv { font-weight: 600; letter-spacing: -0.27px; }
.st-right { display: flex; align-items: center; margin-left: auto; }
.st-notes { display: flex; align-items: center; gap: 2px; width: 63px; font-size: 11px; letter-spacing: -0.2px; }
.view { display: flex; align-items: center; justify-content: center; width: 37px; height: 20px; }
.view.on { background: #dcdcdc; }
.zoom { display: flex; align-items: center; gap: 5px; margin-left: 7px; font-size: 13px; }
.z-track { position: relative; width: 94px; height: 1px; background: #555; }
.z-thumb { position: absolute; left: 30px; top: -5px; width: 5px; height: 11px; background: #666; }
.z-mark { position: absolute; left: 47px; top: -3px; width: 1px; height: 7px; background: #555; }
.z-pct { margin: 0 10px 0 12px; font-size: 11px; letter-spacing: 0; }
.st-right > svg:last-child { margin-right: 3px; }

.cursor { position: absolute; left: 536px; top: 126px; }
</style>

<style>
html, body { margin: 0; background: #f0f0f0; }
</style>
